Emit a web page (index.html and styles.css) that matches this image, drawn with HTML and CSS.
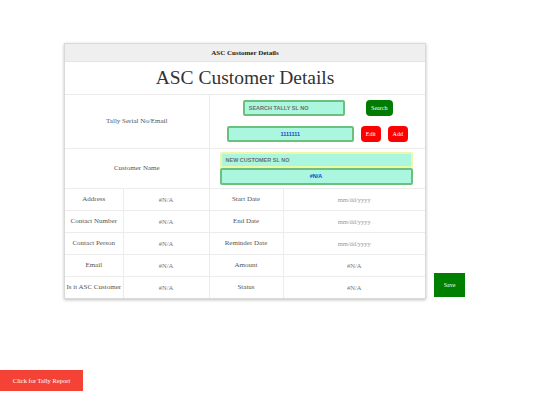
FILE: index.html
```html
<!DOCTYPE html>
<html>
<head>
<meta charset="utf-8">
<link rel="stylesheet" href="styles.css">
</head>
<body>
<div class="page">
  <div class="main">
    <div class="card">
      <div class="card-head">ASC Customer Details</div>
      <div class="card-title">ASC Customer Details</div>
      <table class="grid">
        <colgroup>
          <col class="c1"><col class="c2"><col class="c3"><col class="c4">
        </colgroup>
        <tr class="r-tally">
          <td colspan="2" class="label">Tally Serial No/Email</td>
          <td colspan="2" class="ctrls">
            <div class="line">
              <div class="field search">SEARCH TALLY SL NO</div>
              <div class="btn green">Search</div>
            </div>
            <div class="line line2">
              <div class="field serial">1111111</div>
              <div class="btn red">Edit</div>
              <div class="btn red">Add</div>
            </div>
          </td>
        </tr>
        <tr class="r-name">
          <td colspan="2" class="label">Customer Name</td>
          <td colspan="2" class="ctrls2">
            <div class="field wide newcust">NEW CUSTOMER SL NO</div>
            <div class="field wide na">#N/A</div>
          </td>
        </tr>
        <tr class="r-data">
          <td class="label">Address</td><td class="val">#N/A</td>
          <td class="label">Start Date</td><td class="date">mm/dd/yyyy</td>
        </tr>
        <tr class="r-data">
          <td class="label">Contact Number</td><td class="val">#N/A</td>
          <td class="label">End Date</td><td class="date">mm/dd/yyyy</td>
        </tr>
        <tr class="r-data">
          <td class="label">Contact Person</td><td class="val">#N/A</td>
          <td class="label">Reminder Date</td><td class="date">mm/dd/yyyy</td>
        </tr>
        <tr class="r-data">
          <td class="label">Email</td><td class="val">#N/A</td>
          <td class="label">Amount</td><td class="val">#N/A</td>
        </tr>
        <tr class="r-data">
          <td class="label">Is it ASC Customer</td><td class="val">#N/A</td>
          <td class="label">Status</td><td class="val">#N/A</td>
        </tr>
      </table>
    </div>
    <div class="save">Save</div>
  </div>
  <div class="report">Click for Tally Report</div>
</div>
</body>
</html>
```

FILE: styles.css
```css
* { box-sizing: border-box; }
html, body { margin: 0; padding: 0; background: #fff; }
body { font-family: "Liberation Serif", "Times New Roman", serif; color: #333; }
.page { padding-top: 43px; }
.main { display: flex; align-items: flex-end; padding-left: 64px; }
.card {
  width: 362px;
  border: 1px solid #d9d9d9;
  box-shadow: 0 1px 3px rgba(0,0,0,0.25);
  background: #fff;
}
.card-head {
  height: 18px;
  background: #efefef;
  font-weight: bold;
  font-size: 7px;
  display: flex; align-items: center; justify-content: center;
  color: #222;
  border-bottom: 1px solid #e4e4e4;
}
.card-title {
  height: 33px;
  font-size: 19.5px;
  display: flex; align-items: center; justify-content: center;
  color: #333;
  border-bottom: 1px solid #eaeaea;
}
.grid {
  width: 100%;
  border-collapse: collapse;
  table-layout: fixed;
}
.c1 { width: 58px; } .c2 { width: 86px; } .c3 { width: 74px; } .c4 { width: 142px; }
.grid td {
  border: 1px solid #ececec;
  padding: 0;
  text-align: center;
  vertical-align: middle;
  font-size: 7px;
  color: #555;
  white-space: nowrap;
}
.grid tr:first-child td { border-top: none; }
.grid td:first-child { border-left: none; }
.grid td:last-child { border-right: none; }
.grid tr:last-child td { border-bottom: none; }
.r-tally { height: 53px; }
.r-name { height: 39px; }
.r-data { height: 22px; }
.val { color: #777 !important; font-size: 6.5px !important; }
.date { color: #999 !important; font-size: 6.5px !important; }
.ctrls { padding: 4px 0 !important; }
.line { display: flex; align-items: center; justify-content: center; }
.line .search { margin-right: 21px; margin-left: 1px; }
.line2 { margin-top: 10px; }
.line2 .serial { margin-right: 7px; }
.line2 .btn + .btn { margin-left: 7px; }
.field {
  height: 16px;
  background: #aaf6de;
  border: 2px solid #6cc07e;
  border-radius: 2px;
  font-family: "Liberation Sans", Arial, sans-serif;
  font-weight: bold;
  font-size: 5.5px;
  color: #6f6f6f;
  display: flex; align-items: center;
  padding-left: 4px;
}
.search { width: 102px; }
.serial { width: 127px; justify-content: center; padding-left: 0; color: #1a3fd0; }
.btn {
  height: 16px;
  border-radius: 4px;
  color: #fff;
  font-size: 6px;
  display: flex; align-items: center; justify-content: center;
}
.green { background: #007d00; width: 27px; }
.red { background: #ff0000; width: 20px; }
.ctrls2 { padding: 3px 0 !important; }
.wide { width: 193px; margin: 0 auto 0 10px; }
.newcust { border-color: #eef7a8; }
.na { justify-content: center; padding-left: 0; color: #1a3fd0; height: 17px; }
.save {
  width: 31px; height: 24px;
  margin-left: 8px; margin-bottom: 2px;
  background: #008000;
  color: #fff;
  font-size: 6px;
  display: flex; align-items: center; justify-content: center;
}
.report {
  margin-top: 71px;
  width: 83px; height: 21px;
  background: #f44336;
  color: #fff;
  font-size: 6.5px;
  display: flex; align-items: center; justify-content: center;
}
```
